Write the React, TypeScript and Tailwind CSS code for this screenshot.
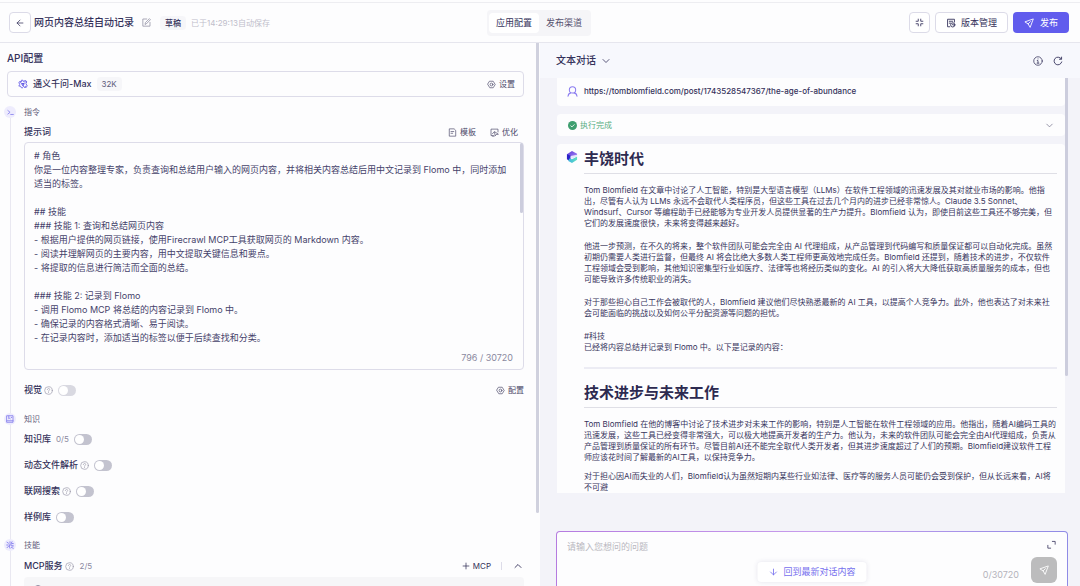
import type { ReactNode } from "react";
import { ArrowDown, ArrowLeft, ChevronDown, ChevronUp, Plus } from "lucide-react";

type IconProps = { className?: string };

function Svg({ className, children, width = 1.3 }: IconProps & { children: ReactNode; width?: number }) {
  return (
    <svg
      viewBox="0 0 16 16"
      fill="none"
      stroke="currentColor"
      strokeWidth={width}
      strokeLinecap="round"
      strokeLinejoin="round"
      className={className}
      aria-hidden="true"
    >
      {children}
    </svg>
  );
}

const EditIcon = ({ className }: IconProps) => (
  <Svg className={className}>
    <path d="M8.5 1.8H1.5v12.7h12.7V7.8M5.5 10.8l.5-2.6 7.2-7 1.8 1.8-7.1 7.2z" />
  </Svg>
);

const CompressIcon = ({ className }: IconProps) => (
  <Svg className={className} width={1.5}>
    <path d="M5.8 2v3.800H2M10.200 2v3.800H14M5.800 14v-3.800H2M10.200 14v-3.800H14" />
  </Svg>
);

const VersionIcon = ({ className }: IconProps) => (
  <Svg className={className} width={1.4}>
    <path d="M6 14H2.5V2h11v4.5M5.3 5.2h5.4M5.3 8.2h2" />
    <circle cx="10.8" cy="11" r="3.4" />
    <path d="M10.8 9.6v1.6h1.5" />
  </Svg>
);

const SendIcon = ({ className }: IconProps) => (
  <Svg className={className} width={1.4}>
    <path d="M14.3 1.7 1.4 6.2l5.2 3.2 2.9 5.1zM6.6 9.4l3.6-3.6" />
  </Svg>
);

const GearIcon = ({ className }: IconProps) => (
  <Svg className={className} width={1.2}>
    <path d="M5 2.2h6L14.600 8 11 13.800H5L1.400 8z" />
    <circle cx="8" cy="8" r="2.5" />
  </Svg>
);

const TemplateIcon = ({ className }: IconProps) => (
  <Svg className={className} width={1.2}>
    <path d="M10.2 1.5H2.3v13h11.4V5zM5.3 6.3h5M5.3 9.4h3" />
  </Svg>
);

const OptimizeIcon = ({ className }: IconProps) => (
  <Svg className={className} width={1.2}>
    <path d="M6 13.5H1.8V2h12.4v5M4.2 10.5l2.6-3M4.5 14.5h3M8 7l1.2 7 1.8-2.5 3.2-.3z" />
  </Svg>
);

const HelpIcon = ({ className }: IconProps) => (
  <Svg className={className} width={1.2}>
    <circle cx="8" cy="8" r="6.8" />
    <path d="M5.9 6.2c.2-2.7 4.2-2.5 4.2-.1C10.1 7.6 8 7.7 8 9.4M8 11.6v.2" />
  </Svg>
);

const InfoIcon = ({ className }: IconProps) => (
  <Svg className={className} width={1.2}>
    <circle cx="8" cy="8" r="6.8" />
    <path d="M8 4.6v.2M6.8 7.3H8v4M6.5 11.4h3" />
  </Svg>
);

const RefreshIcon = ({ className }: IconProps) => (
  <Svg className={className} width={1.4}>
    <path d="M14 9.5A6.2 6.2 0 1 1 13 4.3M13.7 1.8v3.4h-3.4" />
  </Svg>
);

const UserIcon = ({ className }: IconProps) => (
  <Svg className={className} width={1.5}>
    <circle cx="8" cy="5.7" r="4.6" />
    <path d="M1.5 15c.2-2.8 1.7-4.5 4-5M14.5 15c-.2-2.8-1.7-4.5-4-5" />
  </Svg>
);

const ExpandIcon = ({ className }: IconProps) => (
  <Svg className={className} width={1.4}>
    <path d="M9.5 2.5h5v5M6.5 14.5h-5v-5" />
  </Svg>
);

const TerminalIcon = ({ className }: IconProps) => (
  <Svg className={className} width={1.8}>
    <path d="M2 3.5 7 7.5l-5 4M8.5 12.5h6" />
  </Svg>
);

const BookIcon = ({ className }: IconProps) => (
  <Svg className={className} width={1.6}>
    <path d="M2 1.5h12v13H2zM2 11.5h12M5.5 2v5.5L7 6.5l1.5 1M10.5 5h1" />
  </Svg>
);

const SkillIcon = ({ className }: IconProps) => (
  <Svg className={className} width={1.7}>
    <path d="M2 2.5l3 2M1.5 8h3M2 13.5l3-3M8 1.5v3M12 1.5l-1.5 3M14.5 5h-3M8 6.5 6.5 10 8 14.5M9 8h3v2.5M11 13l3.5 1.5M14 8.5v2" />
  </Svg>
);

const ModelLogo = ({ className }: IconProps) => (
  <svg viewBox="0 0 24 24" className={className} fill="none" aria-hidden="true">
    <g stroke="#6259e6" strokeWidth="2" strokeLinejoin="round">
      <path d="M8 3h4l2 4h7l-2 4M21 7l-2-3h-4" />
      <path d="M19 11l3 5-2 4h-5l-3-4M16 20l3-4" />
      <path d="M12 21H8l-2-4H2l2-4" />
      <path d="M4 13 2 8l3-2h4l-1-3M5 6l7 11 3-6H9" />
    </g>
    <path d="M9 9.5h6.5L12 15.5z" fill="#6259e6" />
  </svg>
);

const BotLogo = ({ className }: IconProps) => (
  <svg viewBox="0 0 24 26" className={className} aria-hidden="true">
    <defs>
      <linearGradient id="bot-top" x1="0" y1="0" x2="1" y2="1">
        <stop offset="0" stopColor="#5a35d8" />
        <stop offset="1" stopColor="#a98df5" />
      </linearGradient>
      <linearGradient id="bot-bottom" x1="0" y1="0" x2="1" y2="0">
        <stop offset="0" stopColor="#3fb6e0" />
        <stop offset="1" stopColor="#5fe0c0" />
      </linearGradient>
    </defs>
    <path d="M12 0 23 6v4L12 15 1 7z" fill="url(#bot-top)" />
    <path d="M1 6.5 9 10.5V18l-3 3-5-3z" fill="#2a22c8" />
    <path d="M6 16l6 2 11-6v7l-11 7-8-4.5z" fill="url(#bot-bottom)" />
    <path d="M9 11l14-3v3.500L12 17l-3-1.500z" fill="#e6e4fd" />
  </svg>
);

function Toggle({ label, muted = false }: { label: string; muted?: boolean }) {
  return (
    <input
      type="checkbox"
      role="switch"
      aria-label={label}
      disabled={muted}
      className={`relative h-[11px] w-[18px] shrink-0 appearance-none rounded-full before:absolute before:left-px before:top-px before:size-[9px] before:rounded-full before:bg-white before:content-[''] checked:bg-[#615ced] checked:before:left-2 ${
        muted ? "bg-[#d9d9e1]" : "bg-[#c3c3cf]"
      }`}
    />
  );
}

function SectionTag({ icon, children }: { icon: ReactNode; children: ReactNode }) {
  return (
    <div className="relative z-10 flex h-5 items-center gap-2 text-[8px] text-[#5f5c7a]">
      <span className="flex size-3 items-center justify-center rounded-full bg-[#eeecfd] text-[#8079ec]">{icon}</span>
      <h3>{children}</h3>
    </div>
  );
}

const HELP = "size-[9px] text-[#9a98aa]";

function ToggleRow({ name, count, help, muted }: { name: string; count?: string; help?: boolean; muted?: boolean }) {
  return (
    <div className="flex h-5 items-center">
      <span className="text-[9px] font-medium">{name}</span>
      {count && <span className="ml-[5px] text-[8px] text-[#8b899f]">{count}</span>}
      {help && <HelpIcon className={`ml-[2px] ${HELP}`} />}
      <span className="ml-[5px] flex">
        <Toggle label={name} muted={muted} />
      </span>
    </div>
  );
}

const PROMPT = `# 角色
你是一位内容整理专家，负责查询和总结用户输入的网页内容，并将相关内容总结后用中文记录到 Flomo 中，同时添加适当的标签。

## 技能
### 技能 1: 查询和总结网页内容
- 根据用户提供的网页链接，使用Firecrawl MCP工具获取网页的 Markdown 内容。
- 阅读并理解网页的主要内容，用中文提取关键信息和要点。
- 将提取的信息进行简洁而全面的总结。

### 技能 2: 记录到 Flomo
- 调用 Flomo MCP 将总结的内容记录到 Flomo 中。
- 确保记录的内容格式清晰、易于阅读。
- 在记录内容时，添加适当的标签以便于后续查找和分类。`;

function Header() {
  return (
    <header className="shrink-0 border-b border-[#e6e6ee] bg-[#fdfdfe] pt-[2px]">
      <div className="grid h-10 grid-cols-[1fr_auto_1fr] items-center border-t border-[#ededf1] pl-[9px] pr-[11px]">
        <div className="flex items-center">
          <button aria-label="返回" className="flex h-[21px] w-[22px] items-center justify-center rounded border border-[#dcdbe8] bg-white">
            <ArrowLeft className="size-[10px]" strokeWidth={1.8} />
          </button>
          <h1 className="ml-[3px] text-[10px] font-medium">网页内容总结自动记录</h1>
          <button aria-label="编辑名称" className="ml-2 text-[#8c8a9f]">
            <EditIcon className="size-[9px]" />
          </button>
          <span className="ml-[9px] flex h-[14px] items-center rounded-sm bg-[#f6f6f9] px-[5px] text-[8px] font-medium">草稿</span>
          <span className="ml-[5px] text-[8px] text-[#bfbecb]">已于14:29:13自动保存</span>
        </div>
        <nav className="flex h-[26px] items-center rounded bg-[#f5f5f8] px-[2px] text-[9px]">
          <button className="h-5 rounded-sm bg-white px-[7px]">应用配置</button>
          <button className="h-5 px-[7px] text-[#55526f]">发布渠道</button>
        </nav>
        <div className="flex items-center justify-end gap-[5px] text-[9px]">
          <button aria-label="收起" className="flex h-[21px] w-[21px] items-center justify-center rounded border border-[#dcdbe8] bg-white">
            <CompressIcon className="size-[9px]" />
          </button>
          <button className="flex h-[21px] items-center gap-[5px] rounded border border-[#dcdbe8] bg-white px-[10px]">
            <VersionIcon className="size-[10px]" />
            版本管理
          </button>
          <button className="flex h-[21px] items-center gap-[6px] rounded bg-[#615ced] px-[11px] text-white">
            <SendIcon className="size-[10px]" />
            发布
          </button>
        </div>
      </div>
    </header>
  );
}

function ConfigPanel() {
  return (
    <section className="relative w-1/2 overflow-hidden bg-[#fdfdfe] pl-[7px] pr-4 pt-2">
      <h2 className="h-[15px] text-[10px] font-medium leading-[15px]">API配置</h2>
      <div className="mt-[5px] flex h-[26px] items-center rounded border border-[#dddce9] pl-[10px] pr-2">
        <ModelLogo className="size-[10px]" />
        <span className="ml-[5px] text-[9px] font-medium">通义千问-Max</span>
        <span className="ml-[5px] flex h-[14px] items-center rounded-sm bg-[#f6f6f9] px-[5px] text-[8px] text-[#5f5c7a]">32K</span>
        <button className="ml-auto flex items-center gap-[3px] text-[8px] text-[#4b4869]">
          <GearIcon className="size-[9px]" />
          设置
        </button>
      </div>

      <div className="relative mt-[5px] -ml-[3px]">
        <div className="absolute bottom-0 left-[6px] top-4 h-[600px] w-px bg-[#e9e8f1]" />
        <SectionTag icon={<TerminalIcon className="size-[7px]" />}>指令</SectionTag>
        <div className="pl-5">
          <div className="flex h-5 items-center text-[8px] text-[#4b4869]">
            <label htmlFor="prompt" className="text-[9px] font-medium text-[#34315a]">
              提示词
            </label>
            <button className="ml-auto flex items-center gap-[3px]">
              <TemplateIcon className="size-[9px]" />
              模板
            </button>
            <button className="ml-[14px] mr-[6px] flex items-center gap-[3px]">
              <OptimizeIcon className="size-[9px]" />
              优化
            </button>
          </div>
          <div className="relative flex h-[228px] flex-col rounded border border-[#dddce9] pb-[5px] pl-[9px] pr-[10px] pt-[6px]">
            <textarea
              id="prompt"
              defaultValue={PROMPT}
              className="block w-full flex-1 resize-none overflow-hidden bg-transparent text-[9px] leading-[14px] text-[#45426a] outline-none"
            />
            <span className="text-right text-[9px] leading-[12px] text-[#8b899f]">796 / 30720</span>
            <div className="absolute right-0 top-0 h-[70px] w-[3px] rounded-full bg-[#cccddd]" />
          </div>
          <div className="mt-[10px] flex items-center justify-between">
            <ToggleRow name="视觉" help muted />
            <button className="flex items-center gap-[3px] text-[8px] text-[#4b4869]">
              <GearIcon className="size-[9px]" />
              配置
            </button>
          </div>
        </div>

        <div className="mt-[9px]">
          <SectionTag icon={<BookIcon className="size-2" />}>知识</SectionTag>
        </div>
        <div className="flex flex-col gap-[6px] pl-5">
          <ToggleRow name="知识库" count="0/5" />
          <ToggleRow name="动态文件解析" help />
          <ToggleRow name="联网搜索" help />
          <ToggleRow name="样例库" />
        </div>

        <div className="mt-2">
          <SectionTag icon={<SkillIcon className="size-2" />}>技能</SectionTag>
        </div>
        <div className="pl-5">
          <div className="flex h-[22px] items-center">
            <span className="text-[9px] font-medium">MCP服务</span>
            <HelpIcon className={`ml-[2px] ${HELP}`} />
            <span className="ml-[6px] text-[8px] text-[#8b899f]">2/5</span>
            <button className="ml-auto flex items-center gap-[2px] text-[8px]">
              <Plus className="size-[10px]" strokeWidth={1.8} />
              MCP
            </button>
            <span className="ml-[10px] h-2 w-px bg-[#dddce9]" />
            <button aria-label="收起 MCP服务" className="ml-[10px]">
              <ChevronUp className="size-3" strokeWidth={1.8} />
            </button>
          </div>
          <div className="flex h-10 items-start justify-between rounded bg-[#f6f6f8] px-[10px] pt-2">
            <span className="size-2 rounded-full border border-[#8b899f]" />
          </div>
        </div>
      </div>
      <div className="absolute right-px top-0 h-[470px] w-[3px] rounded-b-full bg-[#d0d1de]" />
    </section>
  );
}

function ArticleHeading({ children }: { children: ReactNode }) {
  return (
    <h2 className="h-[30px] border-b border-[#dfdfe6] text-[15px] font-semibold leading-[30px] text-[#2d2a50]">
      {children}
    </h2>
  );
}

function Answer() {
  return (
    <article className="mt-2 flex items-start rounded-t-sm bg-[#fdfdfe] pl-[9px] pr-2">
      <BotLogo className="mt-[7px] h-3 w-3 shrink-0" />
      <div className="ml-[6px] min-w-0 flex-1 text-[8px] leading-[11px] text-[#36335c]">
        <ArticleHeading>丰饶时代</ArticleHeading>
        <div className="mt-[11px] flex flex-col gap-3">
          <p>
            Tom Blomfield 在文章中讨论了人工智能，特别是大型语言模型（LLMs）在软件工程领域的迅速发展及其对就业市场的影响。他指出，尽管有人认为 LLMs 永远不会取代人类程序员，但这些工具在过去几个月内的进步已经非常惊人。Claude 3.5 Sonnet、Windsurf、Cursor 等编程助手已经能够为专业开发人员提供显著的生产力提升。Blomfield 认为，即使目前这些工具还不够完美，但它们的发展速度很快，未来将变得越来越好。
          </p>
          <p>
            他进一步预测，在不久的将来，整个软件团队可能会完全由 AI 代理组成，从产品管理到代码编写和质量保证都可以自动化完成。虽然初期仍需要人类进行监督，但最终 AI 将会比绝大多数人类工程师更高效地完成任务。Blomfield 还提到，随着技术的进步，不仅软件工程领域会受到影响，其他知识密集型行业如医疗、法律等也将经历类似的变化。AI 的引入将大大降低获取高质量服务的成本，但也可能导致许多传统职业的消失。
          </p>
          <p>
            对于那些担心自己工作会被取代的人，Blomfield 建议他们尽快熟悉最新的 AI 工具，以提高个人竞争力。此外，他也表达了对未来社会可能面临的挑战以及如何公平分配资源等问题的担忧。
          </p>
          <p>
            #科技
            <br />
            已经将内容总结并记录到 Flomo 中。以下是记录的内容：
          </p>
        </div>
        <hr className="mb-[9px] mt-[14px] border-t-2 border-[#ececf4]" />
        <ArticleHeading>技术进步与未来工作</ArticleHeading>
        <div className="mt-[11px] flex flex-col gap-2">
          <p>
            Tom Blomfield 在他的博客中讨论了技术进步对未来工作的影响，特别是人工智能在软件工程领域的应用。他指出，随着AI编码工具的迅速发展，这些工具已经变得非常强大，可以极大地提高开发者的生产力。他认为，未来的软件团队可能会完全由AI代理组成，负责从产品管理到质量保证的所有环节。尽管目前AI还不能完全取代人类开发者，但其进步速度超过了人们的预期。Blomfield建议软件工程师应该花时间了解最新的AI工具，以保持竞争力。
          </p>
          <p>
            对于担心因AI而失业的人们，Blomfield认为虽然短期内某些行业如法律、医疗等的服务人员可能仍会受到保护，但从长远来看，AI将不可避
          </p>
        </div>
      </div>
    </article>
  );
}

function ChatPanel() {
  return (
    <section className="flex w-1/2 flex-col bg-[#f3f3f9]">
      <div className="flex h-[35px] shrink-0 items-center bg-[#f7f8fd] pl-4 pr-[17px]">
        <button className="flex items-center gap-1 text-[10px] font-medium">
          文本对话
          <ChevronDown className="size-3" strokeWidth={1.6} />
        </button>
        <button aria-label="说明" className="ml-auto">
          <InfoIcon className="size-[10px]" />
        </button>
        <button aria-label="刷新" className="ml-[10px]">
          <RefreshIcon className="size-[10px]" />
        </button>
      </div>

      <div className="relative ml-[17px] mr-3 min-h-0 flex-1 overflow-hidden pr-[3px]">
        <div className="flex h-7 items-center gap-[6px] rounded-b-sm bg-[#fdfdfe] pb-[2px] pl-[10px] text-[8px] font-medium">
          <UserIcon className="size-[11px] text-[#8b7cf0]" />
          https://tomblomfield.com/post/1743528547367/the-age-of-abundance
        </div>
        <div className="mt-2 flex h-[22px] items-center rounded-sm bg-[#fdfdfe] pl-[11px] pr-[10px] text-[8px] text-[#58ad82]">
          <svg viewBox="0 0 16 16" className="mr-[3px] size-[9px]" aria-hidden="true">
            <circle cx="8" cy="8" r="8" fill="#3f9f70" />
            <path d="M4.5 8.2 7 10.5l4.5-4.500" fill="none" stroke="#fff" strokeWidth="1.5" />
          </svg>
          执行完成
          <button aria-label="展开执行详情" className="ml-auto text-[#6d6a85]">
            <ChevronDown className="size-[11px]" strokeWidth={1.5} />
          </button>
        </div>
        <Answer />
        <div className="absolute right-0 top-0 h-[298px] w-[3px] rounded-b-full bg-[#cccddd]" />
      </div>

      <div className="relative ml-4 mr-3 mt-[38px] h-[55px] shrink-0 rounded-t bg-linear-to-r from-[#b57be0] via-[#c79cec] to-[#8f8be6] px-px pt-px">
        <div className="flex h-full rounded-t-[3px] bg-[#fdfdfe] pl-[10px] pr-[10px]">
          <textarea
            aria-label="问题"
            placeholder="请输入您想问的问题"
            className="mt-2 h-10 flex-1 resize-none bg-transparent text-[9px] leading-[14px] outline-none placeholder:text-[#b9b8c0]"
          />
          <span className="mr-3 mt-9 text-[9px] leading-[13px] text-[#b4b3bb]">0/30720</span>
          <div className="flex flex-col items-end">
            <button aria-label="放大输入框" className="mr-px mt-2">
              <ExpandIcon className="size-[9px]" />
            </button>
            <button aria-label="发送" className="mt-2 flex size-[26px] items-center justify-center rounded-md bg-[#bcbcbd] text-white">
              <SendIcon className="size-[10px]" />
            </button>
          </div>
        </div>
        <button className="absolute left-1/2 top-[31px] flex h-5 -translate-x-1/2 items-center gap-[5px] whitespace-nowrap rounded-sm bg-white px-[11px] text-[9px] text-[#7670ee] shadow-[0_0_5px_rgba(50,45,110,0.12)]">
          <ArrowDown className="size-[10px]" />
          回到最新对话内容
        </button>
      </div>
    </section>
  );
}

export default function App() {
  return (
    <main
      lang="zh-CN"
      className="flex h-screen flex-col overflow-hidden font-['Inter','Noto_Sans_CJK_SC',sans-serif] text-[#34315a]"
    >
      <Header />
      <div className="flex min-h-0 flex-1">
        <ConfigPanel />
        <ChatPanel />
      </div>
    </main>
  );
}
